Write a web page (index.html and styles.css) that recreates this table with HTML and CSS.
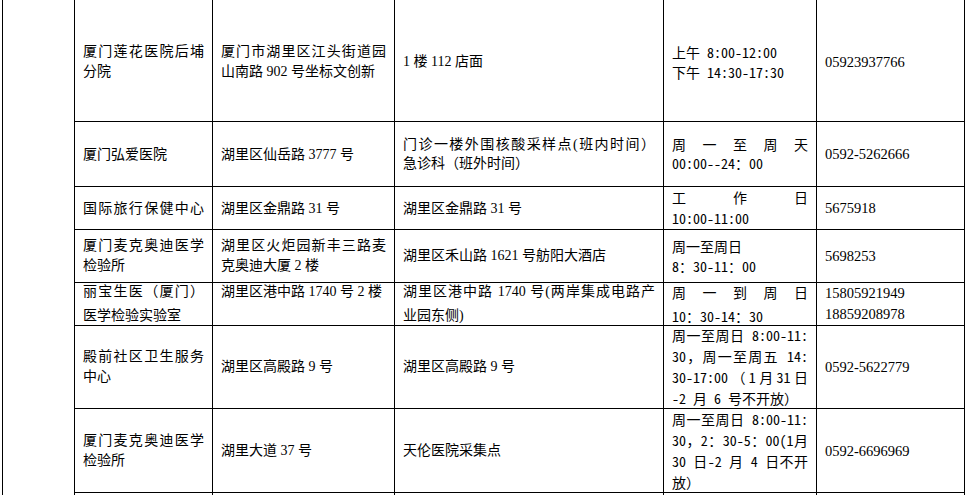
FILE: index.html
```html
<!DOCTYPE html>
<html lang="zh-CN">
<head>
<meta charset="utf-8">
<title>核酸采样点</title>
<link rel="stylesheet" href="styles.css">
</head>
<body>
<div class="sheet">
  <div class="c side"></div>

  <div class="c r1"><span class="l j">厦门莲花医院后埔</span><span class="l">分院</span></div>
  <div class="c r1"><span class="l j">厦门市湖里区江头街道园</span><span class="l">山南路 902 号坐标文创新</span></div>
  <div class="c r1"><span class="l">1 楼 112 店面</span></div>
  <div class="c r1 t"><span class="l">上午 8:00-12:00</span><span class="l">下午 14:30-17:30</span></div>
  <div class="c r1 p"><span class="l">05923937766</span></div>

  <div class="c r2"><span class="l">厦门弘爱医院</span></div>
  <div class="c r2"><span class="l">湖里区仙岳路 3777 号</span></div>
  <div class="c r2"><span class="l j">门诊一楼外围核酸采样点(班内时间）</span><span class="l">急诊科（班外时间）</span></div>
  <div class="c r2 t"><span class="l j">周 一 至 周 天</span><span class="l">00:00--24：00</span></div>
  <div class="c r2 p"><span class="l">0592-5262666</span></div>

  <div class="c r3"><span class="l j">国际旅行保健中心</span></div>
  <div class="c r3"><span class="l">湖里区金鼎路 31 号</span></div>
  <div class="c r3"><span class="l">湖里区金鼎路 31 号</span></div>
  <div class="c r3 t"><span class="l j">工 作 日</span><span class="l">10:00-11:00</span></div>
  <div class="c r3 p"><span class="l">5675918</span></div>

  <div class="c r4"><span class="l j">厦门麦克奥迪医学</span><span class="l">检验所</span></div>
  <div class="c r4"><span class="l j">湖里区火炬园新丰三路麦</span><span class="l">克奥迪大厦 2 楼</span></div>
  <div class="c r4"><span class="l">湖里区禾山路 1621 号舫阳大酒店</span></div>
  <div class="c r4 t"><span class="l">周一至周日</span><span class="l">8：30-11：00</span></div>
  <div class="c r4 p"><span class="l">5698253</span></div>

  <div class="c r5"><span class="l j">丽宝生医（厦门）</span><span class="l">医学检验实验室</span></div>
  <div class="c r5"><span class="l">湖里区港中路 1740 号 2 楼</span><span class="l">&nbsp;</span></div>
  <div class="c r5"><span class="l j">湖里区港中路 1740 号(两岸集成电路产</span><span class="l">业园东侧)</span></div>
  <div class="c r5 t"><span class="l j">周 一 到 周 日</span><span class="l">10：30-14：30</span></div>
  <div class="c r5 p tight"><span class="l">15805921949</span><span class="l">18859208978</span></div>

  <div class="c r6"><span class="l j">殿前社区卫生服务</span><span class="l">中心</span></div>
  <div class="c r6"><span class="l">湖里区高殿路 9 号</span></div>
  <div class="c r6"><span class="l">湖里区高殿路 9 号</span></div>
  <div class="c r6 t many"><span class="l j">周一至周日 8:00-11:</span><span class="l j">30，周一至周五 14:</span><span class="l j">30-17:00（1月31日</span><span class="l">-2 月 6 号不开放）</span></div>
  <div class="c r6 p"><span class="l">0592-5622779</span></div>

  <div class="c r7"><span class="l j">厦门麦克奥迪医学</span><span class="l">检验所</span></div>
  <div class="c r7"><span class="l">湖里大道 37 号</span></div>
  <div class="c r7"><span class="l">天伦医院采集点</span></div>
  <div class="c r7 t many"><span class="l j">周一至周日 8:00-11:</span><span class="l j">30，2：30-5：00(1月</span><span class="l j">30 日-2 月 4 日不开</span><span class="l">放）</span></div>
  <div class="c r7 p"><span class="l">0592-6696969</span></div>

  <div class="c r8"></div>
  <div class="c r8"></div>
  <div class="c r8"></div>
  <div class="c r8"></div>
  <div class="c r8"></div>
</div>
</body>
</html>
```

FILE: styles.css
```css
html, body {
  margin: 0;
  padding: 0;
  background: #ffffff;
}

body {
  color: #000000;
  font-family: "Liberation Serif", "Noto Sans CJK SC", serif;
  font-size: 14px;
  overflow: hidden;
}

.sheet {
  display: grid;
  grid-template-columns: 72px 138px 182px 269px 153px 148px;
  grid-template-rows: 122px 65px 43px 53px 43px 83px 84px 2px;
  margin-left: 2px;
  border-left: 1px solid #000000;
  width: max-content;
}

.c {
  box-sizing: border-box;
  border-right: 1px solid #000000;
  border-bottom: 1px solid #000000;
  padding: 0 8px;
  display: flex;
  flex-direction: column;
  justify-content: center;
  min-width: 0;
  overflow: visible;
}

.side {
  grid-row: 1 / span 8;
  border-bottom: none;
}

.t {
  font-family: "Noto Sans Mono CJK SC", "Liberation Serif", "Noto Sans CJK SC", monospace;
}

.p {
  font-size: 14.5px;
}

.l {
  display: block;
  white-space: nowrap;
}

.j {
  text-align: justify;
  text-align-last: justify;
}

.r1 { line-height: 20px; padding-top: 3px; }
.r2 { line-height: 19px; }
.r3 { line-height: 21px; }
.r4 { line-height: 20px; }
.r5 { line-height: 24px; }
.r5.tight { line-height: 21px; }
.r6 { line-height: 20px; }
.r7 { line-height: 20px; }
.many { line-height: 21px; }
.r8 { border-bottom: none; }
```
